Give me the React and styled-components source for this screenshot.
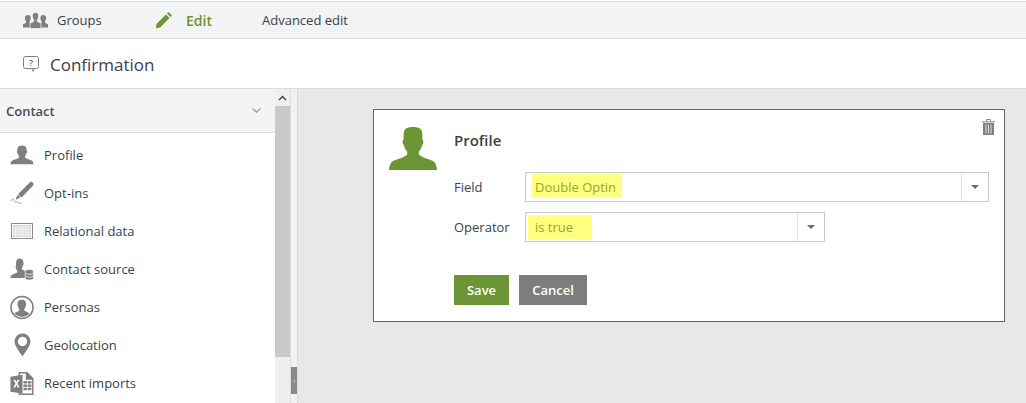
import React from "react";
import styled, { createGlobalStyle } from "styled-components";

const Global = createGlobalStyle`
  html, body { margin: 0; padding: 0; background: #fff; }
  body { font-family: "Open Sans", "Liberation Sans", sans-serif; color: #3c3f48; }
  * { box-sizing: border-box; }
`;
const Page = styled.div`
  width: 1026px; height: 403px; overflow: hidden; display: flex; flex-direction: column;
`;
const Toolbar = styled.div`
  height: 38px; margin-top: 1px; flex: none; display: flex; align-items: center;
  background: #f2f3f3; border-top: 1px solid #dcdcdc; border-bottom: 1px solid #dcdcdc;
  padding-left: 23px; font-size: 13px;
`;
const Tab = styled.div`
  display: flex; align-items: center; gap: ${p => p.$gap}px; width: ${p => p.$w}px; flex: none;
  color: ${p => (p.$active ? "#6c9535" : "#3c3f48")};
  font-weight: ${p => (p.$active ? 600 : 400)};
  font-size: ${p => (p.$active ? 14 : 13)}px;
`;
const Header = styled.div`
  height: 50px; flex: none; display: flex; align-items: center; gap: 11px; padding: 2px 0 0 23px;
  background: #fff; border-bottom: 1px solid #dcdcdc;
  font-size: 17px;
`;
const Body = styled.div`
  flex: 1; display: flex; min-height: 0;
`;
const Sidebar = styled.div`
  width: 275px; flex: none; background: #fff; display: flex; flex-direction: column;
`;
const SectionHead = styled.div`
  height: 44px; flex: none; display: flex; align-items: center; justify-content: space-between;
  padding: 0 14px 0 6px; background: #f4f4f4; border-bottom: 1px solid #dcdcdc;
  font-size: 13px; font-weight: 600; color: #4a4d55;
`;
const Items = styled.div`
  display: flex; flex-direction: column; padding-top: 3px;
`;
const Item = styled.div`
  height: 38px; flex: none; display: flex; align-items: center; gap: 10px; padding-left: 10px;
  font-size: 13px;
`;
const IconSlot = styled.div`
  width: 24px; height: 26px; flex: none; display: flex; align-items: center; justify-content: center;
`;
const Scrollbar = styled.div`
  width: 15px; flex: none; background: #efefef; display: flex; flex-direction: column;
`;
const ScrollUp = styled.div`
  height: 17px; flex: none; display: flex; align-items: center; justify-content: center;
`;
const ScrollThumb = styled.div`
  height: 251px; flex: none; background: #c9c9c9;
`;
const Splitter = styled.div`
  width: 8px; flex: none; background: #f0f2f5; border-left: 1px solid #dcdcdc; border-right: 1px solid #dcdcdc;
  display: flex; flex-direction: column; align-items: center; padding-top: 278px;
`;
const SplitHandle = styled.div`
  width: 6px; height: 27px; flex: none; background: #8a8a8a; display: flex; align-items: center; justify-content: center;
  &::after { content: ""; border: 2px solid transparent; border-right-color: #b5b5b5; margin-left: -2px; }
`;
const Main = styled.div`
  flex: 1; background: #e8e8e8; padding: 20px 0 0 75px;
`;
const Card = styled.div`
  position: relative; width: 632px; height: 213px; background: #fff; border: 1px solid #666;
  display: flex; padding: 17px 0 0 15px;
`;
const Trash = styled.div`
  position: absolute; right: 9px; top: 8px; width: 13px; height: 16px;
`;
const Avatar = styled.div`
  width: 65px; flex: none;
`;
const Form = styled.div`
  flex: 1; display: flex; flex-direction: column; padding-top: 3px;
`;
const FormTitle = styled.div`
  font-size: 15px; font-weight: 600; height: 20px; line-height: 20px; margin-bottom: 22px; color: #3c3f48;
`;
const FormRow = styled.div`
  display: flex; align-items: center; height: 30px; margin-bottom: 10px; font-size: 13px;
`;
const Label = styled.div`
  width: 71px; flex: none;
`;
const Select = styled.div`
  position: relative; width: ${p => p.$w}px; height: 30px; border: 1px solid #c8c8c8; display: flex; background: #fff;
`;
const SelectValue = styled.div`
  flex: 1; display: flex; align-items: center; padding-left: 9px; color: #9aa62a; font-size: 13px;
`;
const Highlight = styled.span`
  position: absolute; top: ${p => p.$t}px; left: ${p => p.$l}px; width: ${p => p.$w}px; height: ${p => p.$h}px; background: #ffff80;
`;
const ValueText = styled.span`
  position: relative;
`;
const SelectArrow = styled.div`
  width: 27px; flex: none; border-left: 1px solid #e2e2e2; display: flex; align-items: center; justify-content: center;
  &::after { content: ""; border: 4px solid transparent; border-top: 4px solid #6a6a6a; border-bottom: 0; }
`;
const Buttons = styled.div`
  display: flex; gap: 10px; margin-top: 23px;
`;
const Button = styled.div`
  height: 30px; width: ${p => p.$w}px; display: flex; align-items: center; justify-content: center;
  background: ${p => p.$bg}; color: #fff; font-size: 13px; font-weight: 600;
`;

const G = "#7f7f7f";
const PersonPath = "M12 1.500c3 0 4.600 1.700 4.600 4.400 0 1 .1 1.600.5 2 .3.500-.1 1.600-.6 2-.4 1.600-1 2.600-1.600 3.400v1.500c1 .9 3.200 1.700 5 2.400 2 .7 3.400 1.400 3.600 4.800H.5c.2-3.400 1.600-4.100 3.600-4.800 1.800-.7 4-1.500 5-2.400v-1.500c-.6-.8-1.200-1.800-1.600-3.400-.5-.4-.9-1.500-.6-2 .4-.4.5-1 .5-2C7.400 3.200 9 1.500 12 1.500z";

const GroupsIcon = () => (
  <svg width="25" height="17" viewBox="0 0 25 17">
    <g fill={G}>
      <path d="M4.800 3c2 0 2.900 1.100 2.900 3 0 1.300-.6 2.500-1.200 3.300v1.200c.8.600 1.500.9 2.200 1.200V15.500H0v-3.300c1.200-.6 2.300-1 3-1.700V9.300C2.400 8.500 1.900 7.300 1.900 6 1.900 4.100 2.800 3 4.800 3z" />
      <path d="M20.200 3c2 0 2.900 1.100 2.900 3 0 1.300-.5 2.500-1.100 3.300v1.200c.7.700 1.800 1.100 3 1.700v3.300h-8.600v-3.800c.7-.3 1.400-.6 2.200-1.200V9.300c-.6-.8-1.200-2-1.200-3.300 0-1.900.9-3 2.800-3z" />
      <path d="M12.500 .5c2.300 0 3.200 1.300 3.200 3.400 0 1.600-.7 3-1.400 3.900v1.500c.9.800 2.400 1.200 3.700 1.900v5.300H7v-5.300c1.300-.7 2.800-1.100 3.700-1.900V7.800C10 6.900 9.300 5.500 9.300 3.900 9.300 1.800 10.200.5 12.500.5z" stroke="#f2f3f3" strokeWidth=".8" />
    </g>
  </svg>
);
const PencilIcon = () => (
  <svg width="18" height="18" viewBox="0 0 18 18">
    <path fill="#6c9535" d="M13.500 1 17 4.500 15.500 6 12 2.500zM11 3.500 14.500 7 5 16.500.8 17.300 1.500 13z" />
  </svg>
);
const QuestionIcon = () => (
  <svg width="16" height="17" viewBox="0 0 16 17">
    <path fill="none" stroke="#7f7f7f" strokeWidth="1" d="M2.500 .5h11a2 2 0 0 1 2 2v8a2 2 0 0 1-2 2h-2.500l-1 3v-3H2.500a2 2 0 0 1-2-2v-8a2 2 0 0 1 2-2z" />
    <text x="8" y="9.500" textAnchor="middle" fontSize="9" fontWeight="600" fontFamily="Open Sans" fill="#666">?</text>
  </svg>
);
const Chevron = () => (
  <svg width="9" height="5" viewBox="0 0 9 5">
    <path fill="none" stroke="#9a9a9a" strokeWidth="1.200" d="M.4.4 4.500 4.300 8.600.4" />
  </svg>
);
const ProfileIcon = () => (
  <svg width="24" height="22" viewBox="0 0 24 24" preserveAspectRatio="none"><path fill={G} d={PersonPath} /></svg>
);
const OptInIcon = () => (
  <svg width="24" height="25" viewBox="0 0 24 25">
    <path fill={G} d="M20.300 1c1.200-1 3.700.8 3.200 2.600-.1.500-.4.900-.8 1.300L12.500 15.500c-.5.500-1 .8-1.500.5L8.500 13.700c-.3-.5 0-1 .4-1.500z" />
    <path fill={G} d="M7.800 13.800l2.700 2.500-4 2.300-.8-.8z" />
    <path fill="none" stroke="#a5a5a5" strokeWidth="1" d="M.5 20c1-1.500 2-2.300 3-1.500s.4 2 1.400 2.400c1.200.5 2-.8 3 .3.800.8 2 1.300 3.600 1.300" />
  </svg>
);
const TableIcon = () => (
  <svg width="22" height="16" viewBox="0 0 22 16">
    <rect x=".5" y=".5" width="21" height="15" fill="#fff" stroke="#8a8a8a" />
    <rect x="2" y="2" width="18" height="12" fill="#d5d5d5" />
    <path stroke="#fff" strokeWidth=".7" d="M4.500 4v10M7 4v10M9.500 4v10M12 4v10M14.500 4v10M17 4v10M2 4h18M2 6.500h18M2 9h18M2 11.500h18" />
  </svg>
);
const SourceIcon = () => (
  <svg width="25" height="24" viewBox="0 0 25 24">
    <path fill={G} d="M10 1c2.500 0 3.800 1.400 3.800 3.700 0 .8.100 1.300.4 1.700.2.400-.1 1.300-.5 1.700-.3 1.300-.8 2.100-1.300 2.800v1.300c.8.700 2.700 1.400 4.100 2v7.300H.5c.100-2.800 1.300-3.400 3-4 1.500-.6 3.300-1.200 4.100-2v-1.300c-.5-.7-1-1.500-1.300-2.800-.4-.4-.7-1.300-.5-1.700.3-.4.400-.9.400-1.700C6.200 2.400 7.500 1 10 1z" />
    <g fill={G} stroke="#fff" strokeWidth=".8">
      <ellipse cx="20" cy="21" rx="4.500" ry="2.500" />
      <ellipse cx="20" cy="18" rx="4.500" ry="2.500" />
      <ellipse cx="20" cy="15" rx="4.500" ry="2.500" />
    </g>
  </svg>
);
const PersonaIcon = () => (
  <svg width="25" height="25" viewBox="0 0 25 25">
    <circle cx="12.500" cy="12.500" r="11.500" fill="#fff" stroke={G} strokeWidth="1.600" />
    <clipPath id="pc"><circle cx="12.500" cy="12.500" r="9.800" /></clipPath>
    <g clipPath="url(#pc)">
      <path fill={G} d="M12.500 4.500c3 0 4.300 1.700 4.300 4.500 0 2-1 4-2 5.200v1.500c1 .8 3 1.400 6 3v5h-17v-5c3-1.600 5-2.200 6-3v-1.500c-1-1.200-2-3.200-2-5.200 0-2.800 1.300-4.500 4.700-4.500z" />
    </g>
  </svg>
);
const PinIcon = () => (
  <svg width="17" height="24" viewBox="0 0 17 24">
    <path fill={G} fillRule="evenodd" d="M8.500.5a8 8 0 0 1 8 8c0 4-4.500 9.500-8 15-3.500-5.500-8-11-8-15a8 8 0 0 1 8-8zm0 3.300a4.700 4.700 0 1 0 0 9.400 4.700 4.700 0 0 0 0-9.400z" />
  </svg>
);
const ExcelIcon = () => (
  <svg width="25" height="25" viewBox="0 0 25 25">
    <path fill={G} d="M9 .5h9l6.500 6.500v17.500H9v-4h1.500v2.500h12.500V8.500h-6.500V2H10.500v3H9z" />
    <path fill={G} d="M.5 5.500 13 3.500v19.500L.5 21z" />
    <path fill="#fff" d="M3.500 8.500h2l1.200 2.500 1.300-2.500h1.900l-2.200 4 2.200 4.200H8l-1.300-2.700-1.300 2.700H3.500l2.200-4.200z" />
    <g fill={G}><rect x="14" y="10" width="3.800" height="2.500" /><rect x="18.500" y="10" width="3.800" height="2.500" /><rect x="14" y="13.500" width="3.800" height="2.500" /><rect x="18.500" y="13.500" width="3.800" height="2.500" /><rect x="14" y="17" width="3.800" height="2.500" /><rect x="18.500" y="17" width="3.800" height="2.500" /></g>
  </svg>
);
const TrashIcon = () => (
  <svg width="13" height="16" viewBox="0 0 13 16">
    <path fill="none" stroke="#888" d="M4.500 2.500V.5h4v2" />
    <rect x="0" y="2" width="13" height="1.500" fill="#aaa" />
    <path fill={G} d="M1 4h11v12H1z" />
    <path stroke="#ddd" d="M4 5.500V14.500M6.500 5.500V14.500M9 5.500V14.500" />
  </svg>
);
const BigAvatar = () => (
  <svg width="48" height="43" viewBox="0 0 24 22" preserveAspectRatio="none">
    <path fill="#6c9535" d="M12 0c3.400 0 4.700 1 4.700 4.300 0 1.200 0 2 .2 2.600.5 0 .4 1.500-.2 2.100-.4 1.700-1.200 3.100-1.800 3.700v1.500c1.400 1.100 3.800 2 5.500 2.600 1.900.6 3.300 1.500 3.600 5.200H0c.3-3.700 1.700-4.600 3.600-5.200C5.300 16.200 7.700 15.300 9.100 14.200v-1.500C8.500 12.100 7.700 10.700 7.300 9 6.700 8.400 6.600 6.900 7.100 6.900c.2-.6.200-1.400.2-2.600C7.300 1 8.600 0 12 0z" />
  </svg>
);

const items = [
  ["Profile", ProfileIcon],
  ["Opt-ins", OptInIcon],
  ["Relational data", TableIcon],
  ["Contact source", SourceIcon],
  ["Personas", PersonaIcon],
  ["Geolocation", PinIcon],
  ["Recent imports", ExcelIcon],
];

export default function App() {
  return (
    <Page>
      <Global />
      <Toolbar>
        <Tab $w={132} $gap={9}><GroupsIcon /><span>Groups</span></Tab>
        <Tab $w={107} $active $gap={13}><PencilIcon /><span>Edit</span></Tab>
        <Tab><span>Advanced edit</span></Tab>
      </Toolbar>
      <Header><QuestionIcon /><span>Confirmation</span></Header>
      <Body>
        <Sidebar>
          <SectionHead>Contact<Chevron /></SectionHead>
          <Items>
            {items.map(([label, Icon]) => (
              <Item key={label}><IconSlot><Icon /></IconSlot><span>{label}</span></Item>
            ))}
          </Items>
        </Sidebar>
        <Scrollbar>
          <ScrollUp>
            <svg width="9" height="6" viewBox="0 0 9 6"><path fill="none" stroke="#444" strokeWidth="1.500" d="M1 5l3.500-3.500L8 5" /></svg>
          </ScrollUp>
          <ScrollThumb />
        </Scrollbar>
        <Splitter><SplitHandle /></Splitter>
        <Main>
          <Card>
            <Trash><TrashIcon /></Trash>
            <Avatar><BigAvatar /></Avatar>
            <Form>
              <FormTitle>Profile</FormTitle>
              <FormRow>
                <Label>Field</Label>
                <Select $w={464}>
                  <Highlight $t={1} $l={6} $w={90} $h={23} />
                  <SelectValue><ValueText>Double Optin</ValueText></SelectValue>
                  <SelectArrow />
                </Select>
              </FormRow>
              <FormRow>
                <Label>Operator</Label>
                <Select $w={300}>
                  <Highlight $t={2} $l={2} $w={64} $h={24} />
                  <SelectValue><ValueText>is true</ValueText></SelectValue>
                  <SelectArrow />
                </Select>
              </FormRow>
              <Buttons>
                <Button $w={55} $bg="#6c9535">Save</Button>
                <Button $w={68} $bg="#7d7d7d">Cancel</Button>
              </Buttons>
            </Form>
          </Card>
        </Main>
      </Body>
    </Page>
  );
}
